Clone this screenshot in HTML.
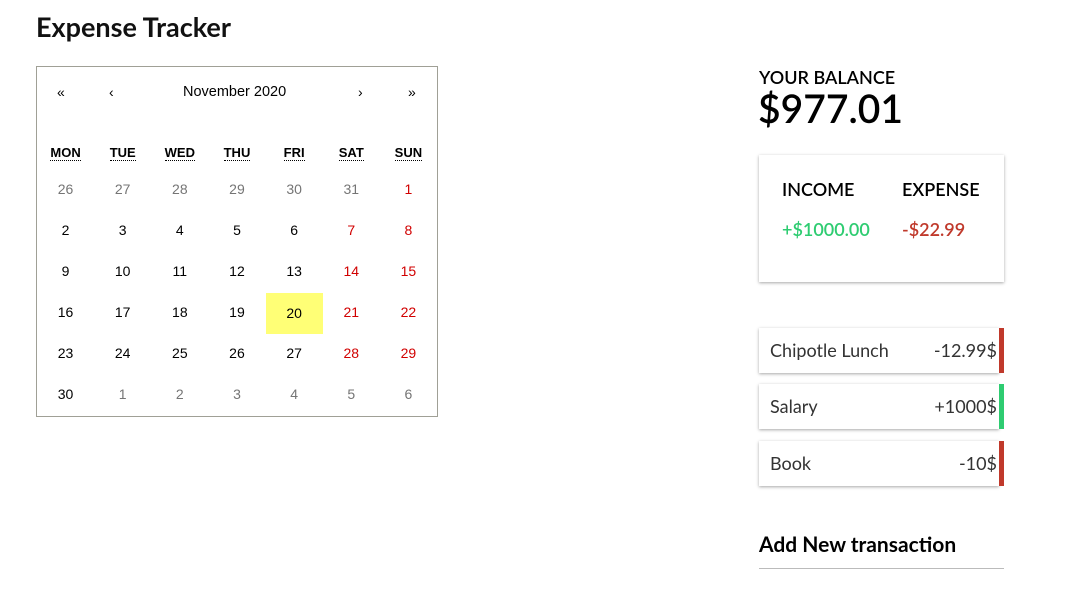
<!DOCTYPE html>
<html><head><style>
body{margin:0;background:#fff;font-family:"Lato","Liberation Sans",sans-serif;width:1070px;height:594px;position:relative;overflow:hidden}
.a{position:absolute}
h1{position:absolute;left:36px;top:10px;margin:0;font-size:27px;font-weight:bold;color:#111}
.cal{position:absolute;left:36px;top:66px;width:400px;height:349px;border:1px solid #a0a096;font-family:"Liberation Sans",Arial,sans-serif}
.nav{position:absolute;top:17px;font-size:14px;color:#000;text-align:center}
.wd{position:absolute;top:78px;width:57.14px;text-align:center;font-size:13px;font-weight:bold;color:#000}
.wd span{border-bottom:1px dotted #000}
.t{position:absolute;width:57.14px;height:41px;line-height:41px;text-align:center;font-size:14px;color:#000}
.n{color:#757575}.w{color:#d10000}.h{background:#ffff76}
.card{position:absolute;left:759px;width:245px;background:#fff;box-shadow:0 1px 3px rgba(0,0,0,0.35)}
.tr{position:absolute;left:759px;width:240px;height:45px;background:#fff;box-shadow:0 1px 3px rgba(0,0,0,0.35);font-size:18px;color:#333;line-height:45px}
.tr .l{position:absolute;left:11px}.tr .r{position:absolute;right:2px}
.tr .b{position:absolute;right:-5px;top:0;width:5px;height:45px}
</style></head><body>
<h1>Expense Tracker</h1>
<div class="cal">
<div class="nav" style="left:20px">«</div>
<div class="nav" style="left:72px">‹</div>
<div class="nav" style="left:146px;font-size:14.5px">November 2020</div>
<div class="nav" style="left:321px">›</div>
<div class="nav" style="left:371px">»</div>
<div class="wd" style="left:0"><span>MON</span></div>
<div class="wd" style="left:57.14px"><span>TUE</span></div>
<div class="wd" style="left:114.28px"><span>WED</span></div>
<div class="wd" style="left:171.42px"><span>THU</span></div>
<div class="wd" style="left:228.57px"><span>FRI</span></div>
<div class="wd" style="left:285.71px"><span>SAT</span></div>
<div class="wd" style="left:342.85px"><span>SUN</span></div>
<div class="t n" style="left:0;top:102px">26</div><div class="t n" style="left:57.14px;top:102px">27</div><div class="t n" style="left:114.28px;top:102px">28</div><div class="t n" style="left:171.42px;top:102px">29</div><div class="t n" style="left:228.57px;top:102px">30</div><div class="t n" style="left:285.71px;top:102px">31</div><div class="t w" style="left:342.85px;top:102px">1</div>
<div class="t" style="left:0;top:143px">2</div><div class="t" style="left:57.14px;top:143px">3</div><div class="t" style="left:114.28px;top:143px">4</div><div class="t" style="left:171.42px;top:143px">5</div><div class="t" style="left:228.57px;top:143px">6</div><div class="t w" style="left:285.71px;top:143px">7</div><div class="t w" style="left:342.85px;top:143px">8</div>
<div class="t" style="left:0;top:184px">9</div><div class="t" style="left:57.14px;top:184px">10</div><div class="t" style="left:114.28px;top:184px">11</div><div class="t" style="left:171.42px;top:184px">12</div><div class="t" style="left:228.57px;top:184px">13</div><div class="t w" style="left:285.71px;top:184px">14</div><div class="t w" style="left:342.85px;top:184px">15</div>
<div class="t" style="left:0;top:225px">16</div><div class="t" style="left:57.14px;top:225px">17</div><div class="t" style="left:114.28px;top:225px">18</div><div class="t" style="left:171.42px;top:225px">19</div><div class="t h" style="left:228.57px;top:226px">20</div><div class="t w" style="left:285.71px;top:225px">21</div><div class="t w" style="left:342.85px;top:225px">22</div>
<div class="t" style="left:0;top:266px">23</div><div class="t" style="left:57.14px;top:266px">24</div><div class="t" style="left:114.28px;top:266px">25</div><div class="t" style="left:171.42px;top:266px">26</div><div class="t" style="left:228.57px;top:266px">27</div><div class="t w" style="left:285.71px;top:266px">28</div><div class="t w" style="left:342.85px;top:266px">29</div>
<div class="t" style="left:0;top:307px">30</div><div class="t n" style="left:57.14px;top:307px">1</div><div class="t n" style="left:114.28px;top:307px">2</div><div class="t n" style="left:171.42px;top:307px">3</div><div class="t n" style="left:228.57px;top:307px">4</div><div class="t n" style="left:285.71px;top:307px">5</div><div class="t n" style="left:342.85px;top:307px">6</div>
</div>
<div class="a" style="left:759px;top:66px;font-size:18px;color:#000;font-weight:600">YOUR BALANCE</div>
<div class="a" style="left:758px;top:86px;font-size:39px;color:#000;font-weight:600">$977.01</div>
<div class="card" style="top:155px;height:127px">
<div class="a" style="left:23px;top:23px;font-size:18px;color:#000;font-weight:600">INCOME</div>
<div class="a" style="left:143px;top:23px;font-size:18px;color:#000;font-weight:600">EXPENSE</div>
<div class="a" style="left:23px;top:63px;font-size:18px;color:#2ecc71;font-weight:600">+$1000.00</div>
<div class="a" style="left:143px;top:63px;font-size:18px;color:#c0392b;font-weight:600">-$22.99</div>
</div>
<div class="tr" style="top:328px"><span class="l">Chipotle Lunch</span><span class="r">-12.99$</span><div class="b" style="background:#c0392b"></div></div>
<div class="tr" style="top:384px"><span class="l">Salary</span><span class="r">+1000$</span><div class="b" style="background:#2ecc71"></div></div>
<div class="tr" style="top:441px"><span class="l">Book</span><span class="r">-10$</span><div class="b" style="background:#c0392b"></div></div>
<div class="a" style="left:759px;top:532px;font-size:21px;font-weight:bold;color:#000">Add New transaction</div>
<div class="a" style="left:759px;top:568px;width:245px;height:1px;background:#bbb"></div>
</body></html>
